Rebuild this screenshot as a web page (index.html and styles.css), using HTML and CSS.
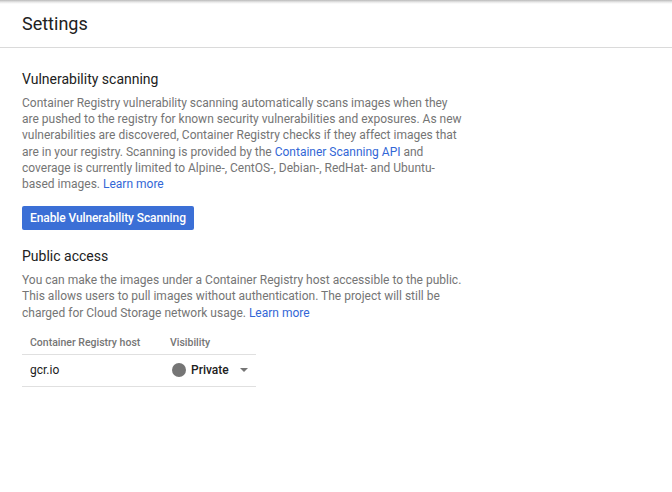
FILE: index.html
```html
<!DOCTYPE html>
<html>
<head>
<meta charset="utf-8">
<link rel="stylesheet" href="styles.css">
</head>
<body>
<div class="shadow"></div>
<header class="header"><h1 class="title">Settings</h1></header>
<main class="content">
  <section class="section">
    <h2 class="heading">Vulnerability scanning</h2>
    <p class="desc">Container Registry vulnerability scanning automatically scans images when they are pushed to the registry for known security vulnerabilities and exposures. As new vulnerabilities are discovered, Container Registry checks if they affect images that are in your registry. Scanning is provided by the <a class="link">Container Scanning API</a> and coverage is currently limited to Alpine-, CentOS-, Debian-, RedHat- and Ubuntu-based images. <a class="link">Learn more</a></p>
    <button class="btn">Enable Vulnerability Scanning</button>
  </section>
  <section class="section">
    <h2 class="heading">Public access</h2>
    <p class="desc">You can make the images under a Container Registry host accessible to the public. This allows users to pull images without authentication. The project will still be charged for Cloud Storage network usage. <a class="link">Learn more</a></p>
    <table class="table">
      <thead>
        <tr><th class="col-host">Container Registry host</th><th class="col-vis">Visibility</th></tr>
      </thead>
      <tbody>
        <tr>
          <td class="col-host">gcr.io</td>
          <td class="col-vis"><span class="vis"><span class="dot"></span><span class="vis-label">Private</span><span class="caret"></span></span></td>
        </tr>
      </tbody>
    </table>
  </section>
</main>
</body>
</html>
```
FILE: styles.css
```css
html, body { margin: 0; padding: 0; background: #fff; }
body { font-family: Roboto, "Noto Sans", Arial, sans-serif; color: #212121; width: 672px; height: 492px; overflow: hidden; }
.shadow { height: 4px; background: linear-gradient(#b9b9b9, #e6e6e6 50%, #fff); }
.header { height: 44px; border-bottom: 1px solid #dadada; padding: 0 22px; box-sizing: border-box; display: flex; align-items: center; }
.title { margin: 0; font-size: 18px; font-weight: 400; color: #212121; line-height: 24px; padding-bottom: 4px; }
.content { padding: 20px 22px 0; }
.section { margin: 0; }
.heading { margin: 0; font-size: 14px; font-weight: 400; color: #212121; line-height: 22px; }
.desc { margin: 5px 0 0; font-size: 12px; line-height: 16.2px; color: #757575; width: 442px; }
.link { color: #3367d6; text-decoration: none; }
.btn { margin: 14px 0 15px; height: 24px; padding: 0 8px; background: #3b6fd6; color: #fff; border: none; border-radius: 2px; font-family: Roboto, Arial, sans-serif; font-size: 12px; font-weight: 500; letter-spacing: -0.1px; display: block; }
.table { margin-top: 10px; border-collapse: collapse; width: 234px; font-size: 11px; }
.table th { text-align: left; font-weight: 500; color: #757575; height: 23px; padding: 0 0 0 8px; border-bottom: 1px solid #e0e0e0; font-size: 10.5px; }
.table td { height: 31px; padding: 0 0 0 8px; border-bottom: 1px solid #e0e0e0; font-size: 12px; color: #212121; }
.table .col-host { width: 132px; }
.vis { display: flex; align-items: center; gap: 5px; margin-left: 2px; }
.dot { width: 14px; height: 14px; border-radius: 50%; background: #757575; }
.vis-label { font-weight: 500; font-size: 12px; }
.caret { width: 0; height: 0; border-left: 4.5px solid transparent; border-right: 4.5px solid transparent; border-top: 4.5px solid #757575; margin-left: 6px; }
```
